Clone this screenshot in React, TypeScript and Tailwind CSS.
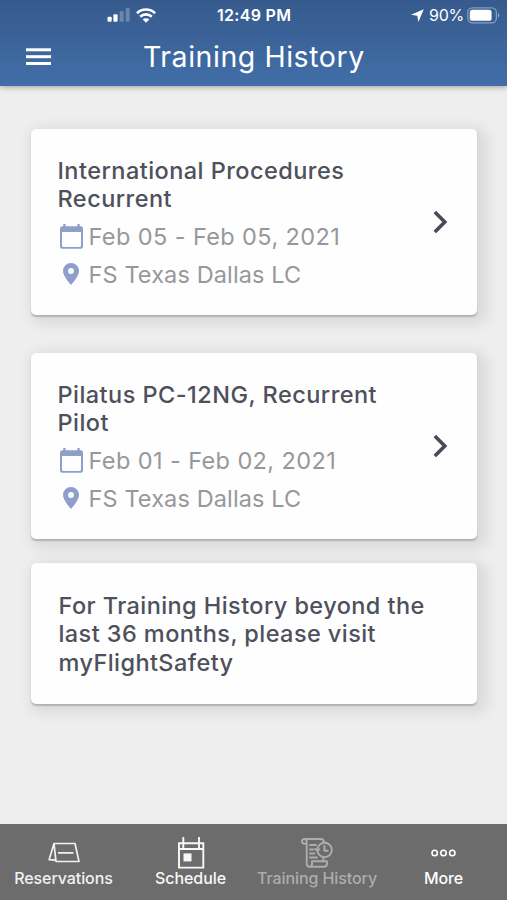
import type { ReactNode } from 'react';

function StatusBar() {
  return (
    <div className="flex h-[30px] items-center text-white">
      <div className="flex w-[217px] items-center gap-[6px] pl-[107px]">
        <svg width="23" height="14" viewBox="0 0 23 14" fill="currentColor">
          <rect x="0.5" y="8.7" width="4.2" height="5" rx="1" />
          <rect x="6.4" y="6.2" width="4.2" height="7.5" rx="1" />
          <rect x="12.6" y="3" width="4" height="10.7" rx="1" opacity=".25" />
          <rect x="18.7" y="0" width="4" height="13.7" rx="1" opacity=".25" />
        </svg>
        <svg width="20" height="15" viewBox="0 0 20 15" fill="none" stroke="currentColor" strokeWidth="2.7">
          <path d="M1 5.2a12.8 12.8 0 0 1 18 0" />
          <path d="M4.2 8.7a8.3 8.3 0 0 1 11.6 0" />
          <path d="M10 14.8 6.7 11.5a4.7 4.7 0 0 1 6.6 0z" fill="currentColor" stroke="none" />
        </svg>
      </div>
      <div className="w-[194px] whitespace-nowrap text-[16px] font-semibold tracking-[0.3px]">12:49 PM</div>
      <div className="flex items-center whitespace-nowrap">
        <svg width="13" height="13" viewBox="0 0 12 12" fill="currentColor">
          <path d="M11.8.2 6.8 12 5.8 6.3 0 5.2z" />
        </svg>
        <span className="ml-[5px] w-[38px] text-[16px] leading-[20px] tracking-[-0.2px]">90%</span>
        <svg width="33" height="17" viewBox="0 0 33 17">
          <rect x=".8" y=".8" width="28.6" height="15" rx="4.6" fill="none" stroke="#fff" strokeOpacity=".4" strokeWidth="1.3" />
          <rect x="2.8" y="2.8" width="21.8" height="11" rx="2.6" fill="#fff" />
          <path d="M31 5.5q2.6 2.8 0 5.6z" fill="#fff" fillOpacity=".45" />
        </svg>
      </div>
    </div>
  );
}

function Header() {
  return (
    <header className="relative h-[86px] bg-gradient-to-b from-[#365a8d] to-[#426fa9] shadow-[0_1px_6px_rgba(0,0,0,0.35)]">
      <StatusBar />
      <div className="flex h-[54px] items-center">
        <svg className="ml-[26px]" width="25" height="18" viewBox="0 0 25 18" fill="#fff">
          <rect y="0.3" width="25" height="3" />
          <rect y="7.2" width="25" height="3" />
          <rect y="14" width="25" height="3" />
        </svg>
        <h1 className="ml-[92px] whitespace-nowrap text-[28.5px] leading-[34px] tracking-[0.55px] text-white">Training History</h1>
      </div>
    </header>
  );
}

const cardStyle =
  'mx-[30.5px] rounded-[5px] bg-[#fefefe] shadow-[0_1.5px_1.5px_rgba(0,0,0,0.2),5px_4px_14px_5px_rgba(0,0,0,0.085)]';

function TrainingCard({ title, date, place }: { title: ReactNode; date: string; place: string }) {
  return (
    <section className={`${cardStyle} flex h-[186px] justify-between pl-[27px] pt-[28px]`}>
      <div className="whitespace-nowrap">
        <h2 className="text-[23.5px] font-medium leading-[28.2px] tracking-[0.46px] text-[#4e505c]">{title}</h2>
        <div className="mt-[4.6px] flex h-[38px] items-center text-[23.5px] tracking-[0.4px] text-[#96989a]">
          <svg className="mr-[6px] ml-[2px] -mt-[2px]" width="23" height="25" viewBox="0 0 23 25" fill="#8da0cb">
            <path fillRule="evenodd" d="M3.3 0h2.3v2.2h11.8V0h2.3v2.2h1A2.3 2.3 0 0 1 23 4.5v18a2.3 2.3 0 0 1-2.3 2.3H2.3A2.3 2.3 0 0 1 0 22.5v-18a2.3 2.3 0 0 1 2.3-2.3h1zM2 8v13.700q0 1.200 1.200 1.200h16.600q1.200 0 1.200-1.200V8z" />
          </svg>
          {date}
        </div>
        <div className="flex h-[37px] items-center text-[23.5px] tracking-[0.12px] text-[#96989a]">
          <svg className="mr-[10px] ml-[5px] -mt-[2px]" width="16" height="22" viewBox="0 0 16 22" fill="#8da0cb">
            <path fillRule="evenodd" d="M8 0a8 8 0 0 1 8 8c0 5.500-8 14-8 14S0 13.500 0 8a8 8 0 0 1 8-8zm0 5.100a2.900 2.900 0 1 0 0 5.800 2.900 2.900 0 0 0 0-5.800z" />
          </svg>
          {place}
        </div>
      </div>
      <svg className="mr-[29px] mt-[53px]" width="15" height="24" viewBox="0 0 15 24" fill="none" stroke="#484a58" strokeWidth="3.6">
        <path d="m1.800 2 10 10-10 10" />
      </svg>
    </section>
  );
}

function Tab({ label, width, tone, children }: { label: string; width: string; tone: string; children: ReactNode }) {
  return (
    <div className={`flex flex-col items-center ${width} ${tone}`}>
      <div className="flex h-[44px] items-end justify-center">{children}</div>
      <span className="whitespace-nowrap text-[16px] font-medium leading-[20px] tracking-[-0.08px]">{label}</span>
    </div>
  );
}

function TabBar() {
  return (
    <nav className="flex h-[76px] bg-[#6c6c6c]">
      <Tab label="Reservations" width="w-[127px]" tone="text-[#f1f1f1]">
        <svg className="mb-[4px]" width="32" height="22" viewBox="0 0 32 22" fill="none" stroke="currentColor" strokeWidth="1.7" strokeLinejoin="round">
          <path d="M6 1.500h21l4 18H8zM6 1.500 1.200 17.600l6 .5M6 1.500l1.800 17M10 10.800h15.500" />
        </svg>
      </Tab>
      <Tab label="Schedule" width="w-[127px]" tone="text-[#f8f8f8]">
        <svg className="-mb-[1px]" width="28" height="32" viewBox="0 0 28 32" fill="none" stroke="currentColor" strokeWidth="1.900">
          <path d="M2 6.200h24.300v24.400H2zM2 12h24.300M6.300 0v12M22 0v12" />
          <rect x="6.500" y="16.400" width="8" height="8" fill="currentColor" stroke="none" />
        </svg>
      </Tab>
      <Tab label="Training History" width="w-[126px]" tone="text-[#adadad]">
        <svg width="32" height="30" viewBox="0 0 32 30" fill="none" stroke="currentColor" strokeWidth="1.900" strokeLinecap="round" strokeLinejoin="round">
          <path d="M5.500 5.700H3.300A2.350 2.350 0 0 1 3.300 1H20q2.500 0 3 3M3.300 1q2.400 0 2.400 3v21.500q0 3.300 3 3.300H23q3 0 3-3.300v-2.200H11v2.200q0 3.300-2.300 3.300M22.300 19.500v3.800" />
          <path d="M9 7h6M9 11.500h3.500M9 15.500h4.500M9 19.500h7" />
          <circle cx="23.600" cy="12" r="7.200" />
          <path d="M23.400 8v4.800h3.300M14.300 11l2 1.800 2-1.500" />
        </svg>
      </Tab>
      <Tab label="More" width="w-[127px]" tone="text-white">
        <svg className="mb-[11px]" width="25" height="8" viewBox="0 0 25 8" fill="none" stroke="currentColor" strokeWidth="1.600">
          <circle cx="3.700" cy="4" r="2.700" />
          <circle cx="12.500" cy="4" r="2.700" />
          <circle cx="21.300" cy="4" r="2.700" />
        </svg>
      </Tab>
    </nav>
  );
}

export default function App() {
  return (
    <div className="flex h-[900px] w-[507px] flex-col overflow-hidden bg-[#eeeeef] font-['Inter','Liberation_Sans',sans-serif]">
      <Header />
      <main className="flex-1 pt-[43px]">
        <TrainingCard title={<>International Procedures<br />Recurrent</>} date="Feb 05 - Feb 05, 2021" place="FS Texas Dallas LC" />
        <div className="h-[38px]" />
        <TrainingCard title={<>Pilatus PC-12NG, Recurrent<br />Pilot</>} date="Feb 01 - Feb 02, 2021" place="FS Texas Dallas LC" />
        <section className={`${cardStyle} mt-[24px] h-[141px] whitespace-nowrap pl-[28px] pt-[29px] text-[23.5px] font-medium leading-[28.4px] tracking-[0.42px] text-[#4e505c]`}>
          For Training History beyond the<br />last 36 months, please visit<br />myFlightSafety
        </section>
      </main>
      <TabBar />
    </div>
  );
}
